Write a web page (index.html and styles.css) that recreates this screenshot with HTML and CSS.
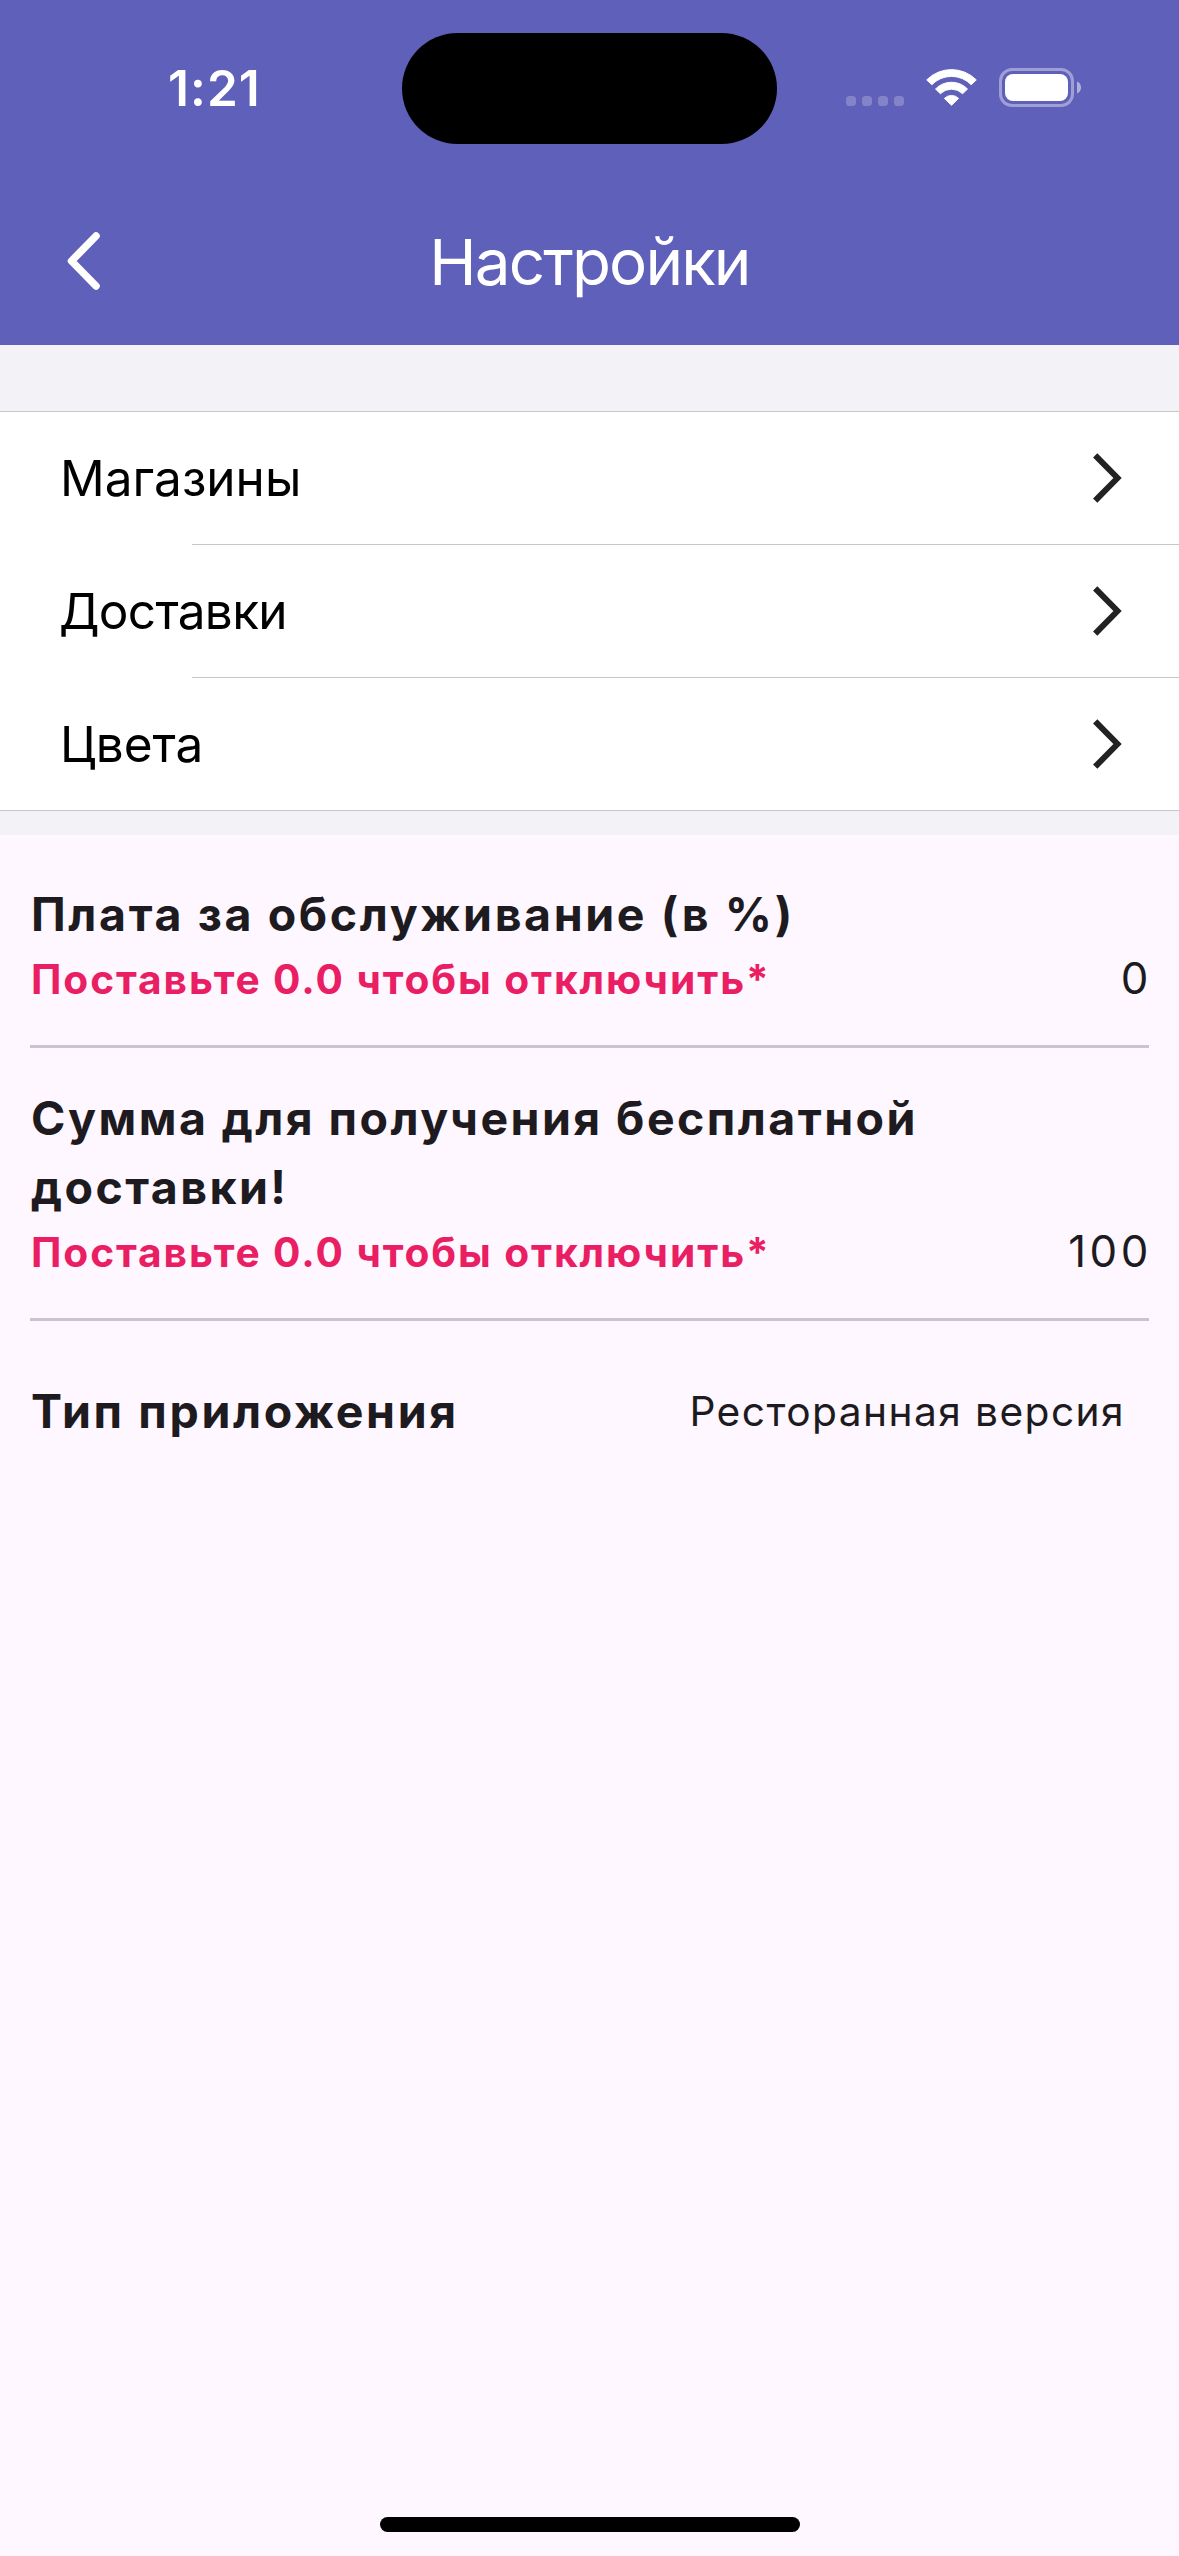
FILE: index.html
```
<!DOCTYPE html>
<html lang="ru">
<head>
<meta charset="utf-8">
<title>Настройки</title>
<link rel="stylesheet" href="styles.css">
</head>
<body>
<div class="screen">
  <header class="header">
    <div class="status">
      <span class="time">1:21</span>
      <span class="island"></span>
      <div class="indicators">
        <svg class="signal" width="58" height="10" viewBox="0 0 58 10" fill="#fff" fill-opacity=".22">
          <rect x="0" width="10" height="10" rx="3.6"/><rect x="16" width="10" height="10" rx="3.6"/><rect x="32" width="10" height="10" rx="3.6"/><rect x="48" width="10" height="10" rx="3.6"/>
        </svg>
        <svg class="wifi" width="51" height="37" viewBox="0 0 51 37" fill="#fff" stroke="#fff" stroke-width="1" stroke-linejoin="round">
          <path d="M.7 10.9A35 35 0 0 1 50.3 10.9L45.2 15.7A27.5 27.5 0 0 0 5.8 15.7Z"/>
          <path d="M9.5 20A22.3 22.3 0 0 1 41.5 20L36.6 24.7A15.8 15.8 0 0 0 14.4 24.7Z"/>
          <path d="M18.4 29.4A10 10 0 0 1 32.6 29.4L25.5 36.3Z"/>
        </svg>
        <svg class="battery" width="83" height="39" viewBox="0 0 83 39">
          <rect x="1.5" y="1.5" width="72" height="36" rx="11.5" fill="none" stroke="#fff" stroke-opacity=".4" stroke-width="3"/>
          <rect x="6" y="6" width="63" height="27" rx="8" fill="#fff"/>
          <path d="M78 13.5C80.6 14.5 82 16.8 82 19.5S80.6 24.5 78 25.5Z" fill="#fff" fill-opacity=".5"/>
        </svg>
      </div>
    </div>
    <div class="toolbar">
      <svg class="back" width="33" height="58" viewBox="0 0 33 58" fill="none" stroke="#fff" stroke-width="7.5" stroke-linecap="round" stroke-linejoin="round"><path d="M29 4L4.500 29L29 54"/></svg>
      <h1 class="title">Настройки</h1>
    </div>
  </header>

  <nav class="menu">
    <ul class="menu-list">
      <li class="menu-row"><span>Магазины</span>
        <svg class="chevron" width="30" height="50" viewBox="0 0 30 50"><path d="M2.2 2.3L24.500 25L2.200 47.7"/></svg></li>
      <li class="menu-line"></li>
      <li class="menu-row"><span class="tight">Доставки</span>
        <svg class="chevron" width="30" height="50" viewBox="0 0 30 50"><path d="M2.2 2.3L24.500 25L2.200 47.7"/></svg></li>
      <li class="menu-line"></li>
      <li class="menu-row"><span>Цвета</span>
        <svg class="chevron" width="30" height="50" viewBox="0 0 30 50"><path d="M2.2 2.3L24.500 25L2.200 47.7"/></svg></li>
    </ul>
  </nav>

  <main class="options">
    <section class="option option-first">
      <div class="label">
        <h2 class="name">Плата за обслуживание (в %)</h2>
        <p class="note">Поставьте 0.0 чтобы отключить*</p>
      </div>
      <span class="value">0</span>
    </section>
    <section class="option option-long">
      <div class="label">
        <h2 class="name">Сумма для получения бесплатной доставки!</h2>
        <p class="note">Поставьте 0.0 чтобы отключить*</p>
      </div>
      <span class="value">100</span>
    </section>
    <section class="app-type">
      <h2 class="name">Тип приложения</h2>
      <span class="version">Ресторанная версия</span>
    </section>
  </main>
  <div class="home-bar"></div>
</div>
</body>
</html>
```
FILE: styles.css
```
* { box-sizing: border-box; margin: 0; padding: 0; }

body {
  font-family: Inter, "Liberation Sans", sans-serif;
  color: #1d1b20;
  background: #fef7ff;
}

.screen {
  display: flex;
  flex-direction: column;
  width: 1179px;
  height: 2556px;
  overflow: hidden;
}

svg { display: block; flex: none; }

/* Header */
.header { height: 345px; background: #5f60b9; color: #fff; }

.status {
  display: grid;
  grid-template-columns: 402px 375px 402px;
  align-items: center;
  height: 177px;
}

.time {
  padding: 0 0 2px 168px;
  font-size: 49.5px;
  font-weight: 600;
  letter-spacing: 1.1px;
  line-height: 60px;
}

.island { height: 111px; border-radius: 56px; background: #000; }

.indicators { display: flex; align-items: flex-end; padding: 0 0 2px 69px; }
.signal { margin: 0 22px 1px 0; }
.wifi { margin: 0 22px 1px 0; }

.toolbar {
  display: grid;
  grid-template-columns: 1fr auto 1fr;
  align-items: center;
  height: 168px;
}

.back { margin-left: 67px; }

.title {
  padding-top: 2px;
  font-size: 63.7px;
  font-weight: 400;
  letter-spacing: -1.87px;
  line-height: 80px;
}

/* Navigation list */
.menu { padding: 66px 0 24px; background: #f2f2f7; }

.menu-list {
  list-style: none;
  background: #fff;
  border-top: 1px solid #c6c6c8;
  border-bottom: 1px solid #c6c6c8;
}

.menu-row {
  display: flex;
  align-items: center;
  justify-content: space-between;
  height: 132px;
  padding: 0 56px 0 60px;
  font-size: 49.5px;
  color: #000;
}

.menu-line { height: 1px; margin-left: 192px; background: #c6c6c8; }
.tight { margin-left: -1px; letter-spacing: -.7px; }

.chevron path { fill: none; stroke: #222; stroke-width: 6; }

/* Options */
.options { flex: 1; padding: 0 30px; }

.option {
  display: flex;
  align-items: flex-end;
  justify-content: space-between;
  padding: 35px 0 34px 1px;
  border-bottom: 3px solid #cac4d0;
}

.option-first { padding-top: 45px; }
.option-long { padding-top: 36px; }

.label { width: 920px; }

.name {
  font-size: 46.5px;
  font-weight: 700;
  letter-spacing: 2.62px;
  line-height: 69px;
}

.option-long .name { letter-spacing: 2.43px; }

.note {
  font-size: 40.7px;
  font-weight: 700;
  letter-spacing: 1.89px;
  line-height: 62px;
  color: #e91e63;
}

.value {
  margin-right: -3px;
  font-size: 43.8px;
  letter-spacing: 3.6px;
  line-height: 64px;
}

.app-type {
  display: flex;
  align-items: center;
  justify-content: space-between;
  height: 180px;
  padding: 0 24px 0 1px;
}

.version { padding-top: 1px; font-size: 40.7px; letter-spacing: 1.42px; line-height: 62px; }

.home-bar {
  width: 420px;
  height: 15px;
  margin: 0 auto 24px;
  border-radius: 8px;
  background: #000;
}
```
